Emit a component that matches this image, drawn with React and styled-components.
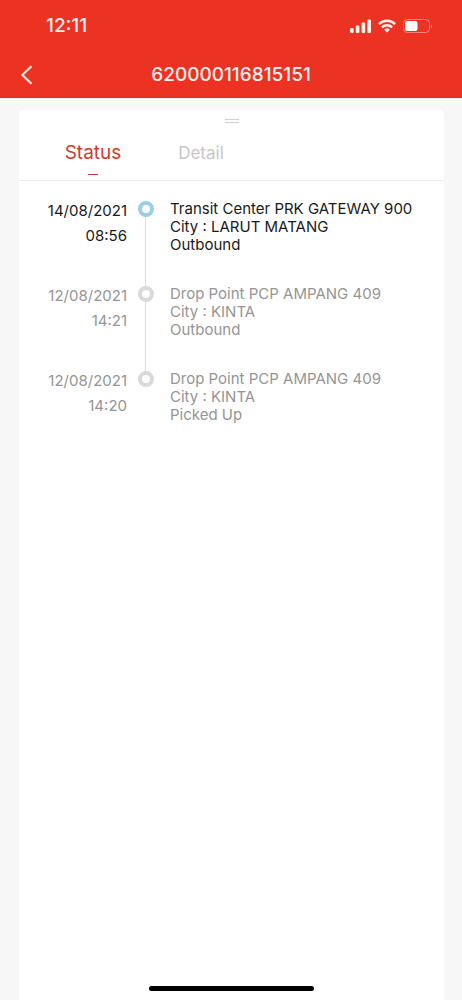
import React, { useState } from "react";
import styled, { createGlobalStyle } from "styled-components";

const GlobalStyle = createGlobalStyle`
  *, *::before, *::after { box-sizing: border-box; }
  body { margin: 0; background: #f7f7f7; font-family: Inter, "Liberation Sans", sans-serif; }
  button { font-family: inherit; border: 0; background: none; padding: 0; cursor: pointer; }
`;

const Screen = styled.div`
  min-height: 100vh;
  display: flex;
  flex-direction: column;
`;

const Header = styled.header`
  background: #ec3323;
  color: #fff0ec;
  border-bottom: 1px solid #d0301f;
`;

const StatusBar = styled.div`
  height: 52px;
  padding: 0 29px 0 46px;
  display: flex;
  align-items: center;
  justify-content: space-between;
`;

const Clock = styled.time`
  font-size: 19px;
  line-height: 22px;
  font-weight: 500;
`;

const Indicators = styled.div`
  display: flex;
  align-items: center;
  gap: 7px;
  svg { display: block; }
`;

const NavBar = styled.div`
  height: 45px;
  display: grid;
  grid-template-columns: 48px 1fr 48px;
  align-items: center;
`;

const BackButton = styled.button`
  height: 44px;
  padding-left: 20px;
  color: inherit;
  display: flex;
  align-items: center;
`;

const Title = styled.h1`
  margin: 0;
  font-size: 19px;
  line-height: 22px;
  font-weight: 500;
  text-align: center;
`;

const Card = styled.main`
  flex: 1;
  margin: 12px 18px 0 19px;
  background: #fff;
  border-radius: 5px 5px 0 0;
  display: flex;
  flex-direction: column;
`;

const Handle = styled.div`
  width: 14px;
  height: 4px;
  margin: 9px auto 0;
  border: solid #cfcfcf;
  border-width: 1px 0;
`;

const Tabs = styled.div`
  height: 58px;
  padding: 0 20px;
  display: flex;
  border-bottom: 1px solid #ebebeb;
`;

const Tab = styled.button`
  width: 108px;
  display: flex;
  flex-direction: column;
  align-items: center;
  padding-top: 18px;
  font-size: ${(p) => (p.$active ? 19 : 17)}px;
  line-height: 24px;
  color: ${(p) => (p.$active ? "#d2392f" : "#c6c6c6")};
  &::after {
    content: "";
    width: 10px;
    height: 1px;
    margin-top: 9px;
    background: ${(p) => (p.$active ? "#c23b34" : "transparent")};
  }
`;

const Timeline = styled.ol`
  list-style: none;
  margin: 0;
  padding: 17px 16px 0 20px;
`;

const Event = styled.li`
  display: grid;
  grid-template-columns: 88px 37px 1fr;
  min-height: 85px;
  font-size: 15px;
  color: ${(p) => (p.$current ? "#1a1a1a" : "#959595")};
`;

const When = styled.time`
  text-align: right;
  line-height: 25px;
  span { display: block; }
`;

const Track = styled.div`
  display: flex;
  flex-direction: column;
  align-items: center;
  padding-top: 3px;
`;

const Dot = styled.span`
  width: 16px;
  height: 16px;
  border-radius: 50%;
  border: 4px solid ${(p) => (p.$current ? "#9bcde6" : "#d9d9d9")};
`;

const Line = styled.span`
  flex: 1;
  width: 1px;
  margin-bottom: -3px;
  background: #dcdcdc;
`;

const Description = styled.div`
  padding: 2px 0 0 6px;
  line-height: 18px;
  p { margin: 0; }
`;

const HomeIndicator = styled.div`
  width: 165px;
  height: 5px;
  margin: auto auto 9px;
  border-radius: 3px;
  background: #000;
`;

const events = [
  { date: "14/08/2021", time: "08:56", lines: ["Transit Center PRK GATEWAY 900", "City : LARUT MATANG", "Outbound"] },
  { date: "12/08/2021", time: "14:21", lines: ["Drop Point PCP AMPANG 409", "City : KINTA", "Outbound"] },
  { date: "12/08/2021", time: "14:20", lines: ["Drop Point PCP AMPANG 409", "City : KINTA", "Picked Up"] },
];

const SignalIcon = () => (
  <svg width="21" height="14" viewBox="0 0 21 14" fill="currentColor" aria-hidden="true">
    <rect x="0" y="9" width="3.6" height="5" rx="1" />
    <rect x="5.8" y="6.4" width="3.6" height="7.6" rx="1" />
    <rect x="11.6" y="3.4" width="3.6" height="10.6" rx="1" />
    <rect x="17.4" y=".5" width="3.6" height="13.5" rx="1" />
  </svg>
);

const WifiIcon = () => (
  <svg width="18" height="14" viewBox="0 0 18 14" fill="none" stroke="currentColor" strokeWidth="2.4" aria-hidden="true">
    <path d="M.9 5.1a11.6 11.6 0 0 1 16.2 0" />
    <path d="M3.9 8.4a7.3 7.3 0 0 1 10.2 0" />
    <path d="M9 13.6 6.1 10.7a4.1 4.1 0 0 1 5.8 0Z" fill="currentColor" stroke="none" />
  </svg>
);

const BatteryIcon = () => (
  <svg width="30" height="14" viewBox="0 0 30 14" fill="none" aria-hidden="true">
    <rect x=".5" y=".5" width="26" height="13" rx="3.8" stroke="#fff" strokeOpacity=".4" />
    <rect x="2" y="2" width="12.5" height="10" rx="2.3" fill="#fff" />
    <path d="M28 4.8c1.6.8 1.6 3.6 0 4.4Z" fill="#fff" fillOpacity=".45" />
  </svg>
);

const BackIcon = () => (
  <svg width="13" height="20" viewBox="0 0 13 20" fill="none" stroke="currentColor" strokeWidth="2" aria-hidden="true">
    <path d="M11.5 1.2 2.3 10l9.2 8.8" />
  </svg>
);

export default function App() {
  const [tab, setTab] = useState("Status");
  return (
    <Screen>
      <GlobalStyle />
      <Header>
        <StatusBar>
          <Clock>12:11</Clock>
          <Indicators>
            <SignalIcon />
            <WifiIcon />
            <BatteryIcon />
          </Indicators>
        </StatusBar>
        <NavBar>
          <BackButton type="button" aria-label="Back">
            <BackIcon />
          </BackButton>
          <Title>620000116815151</Title>
        </NavBar>
      </Header>
      <Card>
        <Handle />
        <Tabs role="tablist">
          {["Status", "Detail"].map((name) => (
            <Tab
              key={name}
              type="button"
              role="tab"
              aria-selected={tab === name}
              $active={tab === name}
              onClick={() => setTab(name)}
            >
              {name}
            </Tab>
          ))}
        </Tabs>
        <Timeline>
          {events.map((event, i) => (
            <Event key={event.time} $current={i === 0}>
              <When>
                <span>{event.date}</span>
                <span>{event.time}</span>
              </When>
              <Track>
                <Dot $current={i === 0} />
                {i < events.length - 1 && <Line />}
              </Track>
              <Description>
                {event.lines.map((line) => (
                  <p key={line}>{line}</p>
                ))}
              </Description>
            </Event>
          ))}
        </Timeline>
        <HomeIndicator />
      </Card>
    </Screen>
  );
}
